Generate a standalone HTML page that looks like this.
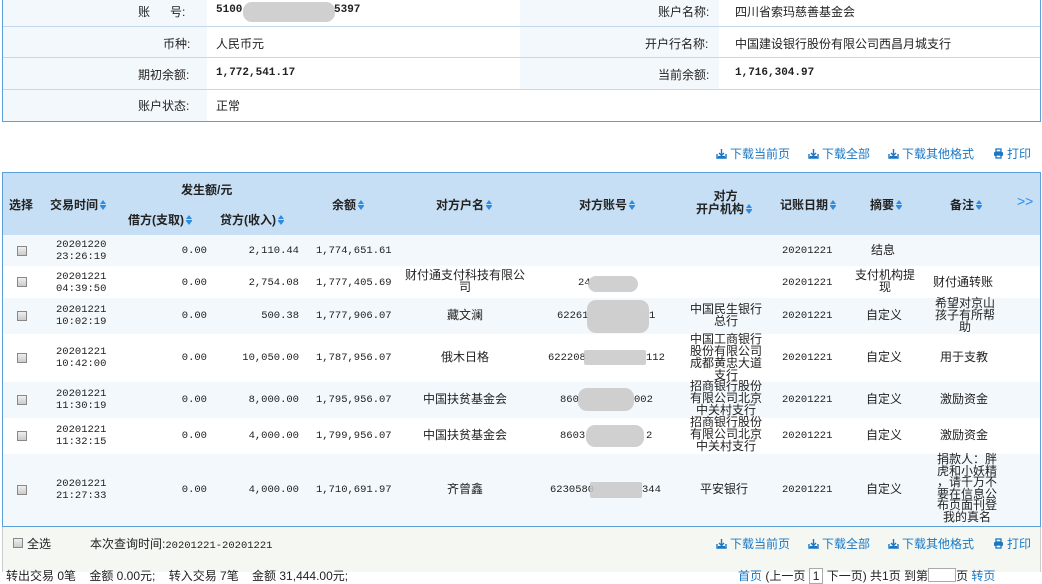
<!DOCTYPE html>
<html><head><meta charset="utf-8"><style>
*{margin:0;padding:0;box-sizing:border-box}
body{width:1042px;height:572px;overflow:hidden;background:#fff;font-family:"Liberation Sans","Noto Sans CJK SC",sans-serif;font-size:12px;color:#222;position:relative}
.a{position:absolute}
.m{font-family:"Liberation Mono","Noto Sans CJK SC",monospace;font-size:10.5px}
.b{font-weight:bold}
.lbl{background:#f3f8fc}
.hl{border-bottom:1px solid #c5d8ea}
.blur{position:absolute;background:#c8c8c8;border-radius:9px;opacity:.85}
.lk{color:#1a77c4;font-size:12px}
.lk svg{vertical-align:-1px;margin-right:3px}
.srt{display:inline-block;width:6px;height:11px;vertical-align:-2px;margin-left:2px;background:linear-gradient(#2e8be0,#2e8be0) center 5px/6px 1px no-repeat}
.srt:before{content:"";display:block;border:3px solid transparent;border-bottom:4px solid #2e8be0;border-top:none;margin-top:0}
.srt:after{content:"";display:block;border:3px solid transparent;border-top:4px solid #2e8be0;border-bottom:none;margin-top:2px}
.cb{position:absolute;left:17px;width:10px;height:10px;border:1px solid #888;background:linear-gradient(#eee,#ccc)}
.h{font-weight:bold;font-size:12px;color:#222}
.c{text-align:center}
.r{text-align:right}
.cell{position:absolute;line-height:12px}
</style></head><body>
<svg width="0" height="0" style="position:absolute"><defs>
<symbol id="dl" viewBox="0 0 11 11"><path d="M1 6v4h9V6" fill="none" stroke="#1a77c4" stroke-width="1.4"/><path d="M5.5 1v6M3 5l2.5 2.5L8 5" fill="none" stroke="#1a77c4" stroke-width="1.4"/><rect x="2" y="8" width="7" height="1.5" fill="#1a77c4"/></symbol>
<symbol id="pr" viewBox="0 0 11 11"><rect x="3" y="1" width="5" height="3" fill="none" stroke="#1a77c4" stroke-width="1.3"/><rect x="1" y="4" width="9" height="4" rx="1" fill="#1a77c4"/><rect x="3" y="7" width="5" height="3" fill="#fff" stroke="#1a77c4" stroke-width="1.3"/></symbol>
</defs></svg>
<!-- top info -->
<div class="a" style="left:2px;top:0;width:1039px;height:122px;border:1px solid #5a9fd8;border-top:none"></div>
<div class="a lbl" style="left:3px;top:0;width:204px;height:121px"></div>
<div class="a lbl" style="left:520px;top:0;width:199px;height:89px"></div>
<div class="a hl" style="left:3px;top:0;width:1037px;height:27px"></div>
<div class="a hl" style="left:3px;top:27px;width:1037px;height:31px"></div>
<div class="a hl" style="left:3px;top:58px;width:1037px;height:32px"></div>
<div class="a" style="left:138px;top:3px">账&nbsp;&nbsp;&nbsp;&nbsp;&nbsp;&nbsp;号:</div>
<div class="a b m" style="left:216px;top:4px;font-size:11px">5100</div>
<div class="blur" style="left:243px;top:2px;width:92px;height:20px"></div>
<div class="a b m" style="left:334px;top:4px;font-size:11px">5397</div>
<div class="a" style="left:163px;top:35px">币种:</div>
<div class="a" style="left:216px;top:35px">人民币元</div>
<div class="a" style="left:138px;top:66px">期初余额:</div>
<div class="a b m" style="left:216px;top:67px;font-size:11px">1,772,541.17</div>
<div class="a" style="left:138px;top:97px">账户状态:</div>
<div class="a" style="left:216px;top:97px">正常</div>
<div class="a" style="left:658px;top:3px">账户名称:</div>
<div class="a" style="left:735px;top:3px">四川省索玛慈善基金会</div>
<div class="a" style="left:645px;top:35px">开户行名称:</div>
<div class="a" style="left:735px;top:35px">中国建设银行股份有限公司西昌月城支行</div>
<div class="a" style="left:658px;top:66px">当前余额:</div>
<div class="a b m" style="left:735px;top:67px;font-size:11px">1,716,304.97</div>

<!-- links -->
<div class="a lk" style="left:716px;top:145px"><svg width="11" height="11"><use href="#dl"/></svg>下载当前页</div>
<div class="a lk" style="left:808px;top:145px"><svg width="11" height="11"><use href="#dl"/></svg>下载全部</div>
<div class="a lk" style="left:888px;top:145px"><svg width="11" height="11"><use href="#dl"/></svg>下载其他格式</div>
<div class="a lk" style="left:993px;top:145px"><svg width="11" height="11"><use href="#pr"/></svg>打印</div>

<!-- table -->
<div class="a" style="left:2px;top:172px;width:1039px;height:355px;border:1px solid #5a9fd8"></div>
<div class="a" style="left:3px;top:173px;width:1037px;height:62px;background:#c6dff4"></div>
<div class="a" style="left:3px;top:235px;width:1037px;height:31px;background:#f3f8fc"></div>
<div class="a" style="left:3px;top:298px;width:1037px;height:36px;background:#f3f8fc"></div>
<div class="a" style="left:3px;top:382px;width:1037px;height:36px;background:#f3f8fc"></div>
<div class="a" style="left:3px;top:454px;width:1037px;height:72px;background:#f3f8fc"></div>

<div class="a h" style="left:9px;top:196px">选择</div>
<div class="a h" style="left:50px;top:196px">交易时间<span class="srt"></span></div>
<div class="a h" style="left:181px;top:181px">发生额/元</div>
<div class="a h" style="left:128px;top:211px">借方(支取)<span class="srt"></span></div>
<div class="a h" style="left:220px;top:211px">贷方(收入)<span class="srt"></span></div>
<div class="a h" style="left:332px;top:196px">余额<span class="srt"></span></div>
<div class="a h" style="left:436px;top:196px">对方户名<span class="srt"></span></div>
<div class="a h" style="left:579px;top:196px">对方账号<span class="srt"></span></div>
<div class="a h c" style="left:696px;top:190px;line-height:13px">&nbsp;对方<br>开户机构<span class="srt"></span></div>
<div class="a h" style="left:780px;top:196px">记账日期<span class="srt"></span></div>
<div class="a h" style="left:870px;top:196px">摘要<span class="srt"></span></div>
<div class="a h" style="left:950px;top:196px">备注<span class="srt"></span></div>
<div class="a" style="left:1017px;top:193px;color:#2e8be0;font-size:14px">&gt;&gt;</div>

<!-- rows -->
<div class="cb" style="top:246px"></div>
<div class="cell m" style="left:56px;top:239px">20201220<br>23:26:19</div>
<div class="cell m r" style="left:140px;top:245px;width:67px">0.00</div>
<div class="cell m r" style="left:220px;top:245px;width:79px">2,110.44</div>
<div class="cell m" style="left:316px;top:245px">1,774,651.61</div>
<div class="cell m" style="left:782px;top:245px">20201221</div>
<div class="cell" style="left:871px;top:244px">结息</div>

<div class="cb" style="top:277px"></div>
<div class="cell m" style="left:56px;top:271px">20201221<br>04:39:50</div>
<div class="cell m r" style="left:140px;top:277px;width:67px">0.00</div>
<div class="cell m r" style="left:220px;top:277px;width:79px">2,754.08</div>
<div class="cell m" style="left:316px;top:277px">1,777,405.69</div>
<div class="cell c" style="left:400px;top:269px;width:130px">财付通支付科技有限公<br>司</div>
<div class="cell m" style="left:578px;top:277px">24</div>
<div class="blur" style="left:588px;top:276px;width:50px;height:16px"></div>
<div class="cell m" style="left:782px;top:277px">20201221</div>
<div class="cell c" style="left:850px;top:269px;width:70px">支付机构提<br>现</div>
<div class="cell" style="left:933px;top:276px">财付通转账</div>

<div class="cb" style="top:311px"></div>
<div class="cell m" style="left:56px;top:304px">20201221<br>10:02:19</div>
<div class="cell m r" style="left:140px;top:310px;width:67px">0.00</div>
<div class="cell m r" style="left:220px;top:310px;width:79px">500.38</div>
<div class="cell m" style="left:316px;top:310px">1,777,906.07</div>
<div class="cell c" style="left:400px;top:309px;width:130px">藏文澜</div>
<div class="cell m" style="left:557px;top:310px">62261</div>
<div class="blur" style="left:587px;top:300px;width:62px;height:33px"></div>
<div class="cell m" style="left:649px;top:310px">1</div>
<div class="cell c" style="left:688px;top:303px;width:76px">中国民生银行<br>总行</div>
<div class="cell m" style="left:782px;top:310px">20201221</div>
<div class="cell" style="left:866px;top:309px">自定义</div>
<div class="cell c" style="left:930px;top:297px;width:70px">希望对京山<br>孩子有所帮<br>助</div>

<div class="cb" style="top:353px"></div>
<div class="cell m" style="left:56px;top:346px">20201221<br>10:42:00</div>
<div class="cell m r" style="left:140px;top:352px;width:67px">0.00</div>
<div class="cell m r" style="left:220px;top:352px;width:79px">10,050.00</div>
<div class="cell m" style="left:316px;top:352px">1,787,956.07</div>
<div class="cell c" style="left:400px;top:351px;width:130px">俄木日格</div>
<div class="cell m" style="left:548px;top:352px">622208</div>
<div class="blur" style="left:584px;top:350px;width:62px;height:15px;border-radius:2px"></div>
<div class="cell m" style="left:646px;top:352px">112</div>
<div class="cell c" style="left:688px;top:333px;width:76px">中国工商银行<br>股份有限公司<br>成都黄忠大道<br>支行</div>
<div class="cell m" style="left:782px;top:352px">20201221</div>
<div class="cell" style="left:866px;top:351px">自定义</div>
<div class="cell" style="left:940px;top:351px">用于支教</div>

<div class="cb" style="top:395px"></div>
<div class="cell m" style="left:56px;top:388px">20201221<br>11:30:19</div>
<div class="cell m r" style="left:140px;top:394px;width:67px">0.00</div>
<div class="cell m r" style="left:220px;top:394px;width:79px">8,000.00</div>
<div class="cell m" style="left:316px;top:394px">1,795,956.07</div>
<div class="cell c" style="left:400px;top:393px;width:130px">中国扶贫基金会</div>
<div class="cell m" style="left:560px;top:394px">860</div>
<div class="blur" style="left:578px;top:388px;width:56px;height:23px"></div>
<div class="cell m" style="left:634px;top:394px">002</div>
<div class="cell c" style="left:688px;top:380px;width:76px">招商银行股份<br>有限公司北京<br>中关村支行</div>
<div class="cell m" style="left:782px;top:394px">20201221</div>
<div class="cell" style="left:866px;top:393px">自定义</div>
<div class="cell" style="left:940px;top:393px">激励资金</div>

<div class="cb" style="top:431px"></div>
<div class="cell m" style="left:56px;top:424px">20201221<br>11:32:15</div>
<div class="cell m r" style="left:140px;top:430px;width:67px">0.00</div>
<div class="cell m r" style="left:220px;top:430px;width:79px">4,000.00</div>
<div class="cell m" style="left:316px;top:430px">1,799,956.07</div>
<div class="cell c" style="left:400px;top:429px;width:130px">中国扶贫基金会</div>
<div class="cell m" style="left:560px;top:430px">8603</div>
<div class="blur" style="left:586px;top:425px;width:58px;height:22px"></div>
<div class="cell m" style="left:646px;top:430px">2</div>
<div class="cell c" style="left:688px;top:416px;width:76px">招商银行股份<br>有限公司北京<br>中关村支行</div>
<div class="cell m" style="left:782px;top:430px">20201221</div>
<div class="cell" style="left:866px;top:429px">自定义</div>
<div class="cell" style="left:940px;top:429px">激励资金</div>

<div class="cb" style="top:485px"></div>
<div class="cell m" style="left:56px;top:478px">20201221<br>21:27:33</div>
<div class="cell m r" style="left:140px;top:484px;width:67px">0.00</div>
<div class="cell m r" style="left:220px;top:484px;width:79px">4,000.00</div>
<div class="cell m" style="left:316px;top:484px">1,710,691.97</div>
<div class="cell c" style="left:400px;top:483px;width:130px">齐曾鑫</div>
<div class="cell m" style="left:550px;top:484px">6230580</div>
<div class="blur" style="left:590px;top:482px;width:52px;height:16px;border-radius:2px"></div>
<div class="cell m" style="left:642px;top:484px">344</div>
<div class="cell" style="left:700px;top:483px">平安银行</div>
<div class="cell m" style="left:782px;top:484px">20201221</div>
<div class="cell" style="left:866px;top:483px">自定义</div>
<div class="cell c" style="left:932px;top:454px;width:70px;line-height:11.6px">捐款人：胖<br>虎和小妖精<br>，请千万不<br>要在信息公<br>布页面刊登<br>我的真名</div>

<!-- footer -->
<div class="a" style="left:2px;top:527px;width:1039px;height:45px;background:#f5f8f2;border-left:1px solid #ccc;border-right:1px solid #ccc"></div>
<div class="cb" style="top:538px;left:13px"></div>
<div class="a" style="left:27px;top:535px">全选</div>
<div class="a" style="left:90px;top:535px">本次查询时间:<span class="m">20201221-20201221</span></div>
<div class="a lk" style="left:716px;top:535px"><svg width="11" height="11"><use href="#dl"/></svg>下载当前页</div>
<div class="a lk" style="left:808px;top:535px"><svg width="11" height="11"><use href="#dl"/></svg>下载全部</div>
<div class="a lk" style="left:888px;top:535px"><svg width="11" height="11"><use href="#dl"/></svg>下载其他格式</div>
<div class="a lk" style="left:993px;top:535px"><svg width="11" height="11"><use href="#pr"/></svg>打印</div>
<div class="a" style="left:6px;top:567px">转出交易 0笔&nbsp;&nbsp;&nbsp;&nbsp;金额 0.00元;&nbsp;&nbsp;&nbsp;&nbsp;转入交易 7笔&nbsp;&nbsp;&nbsp;&nbsp;金额 31,444.00元;</div>
<div class="a" style="left:738px;top:567px"><span style="color:#1a77c4">首页</span> (上一页 <span style="border:1px solid #aaa;background:#fff;padding:0 3px">1</span> 下一页) 共1页 到第<span style="display:inline-block;width:28px;height:14px;border:1px solid #aaa;background:#fff;vertical-align:-2px"></span>页 <span style="color:#1a77c4">转页</span></div>
</body></html>
